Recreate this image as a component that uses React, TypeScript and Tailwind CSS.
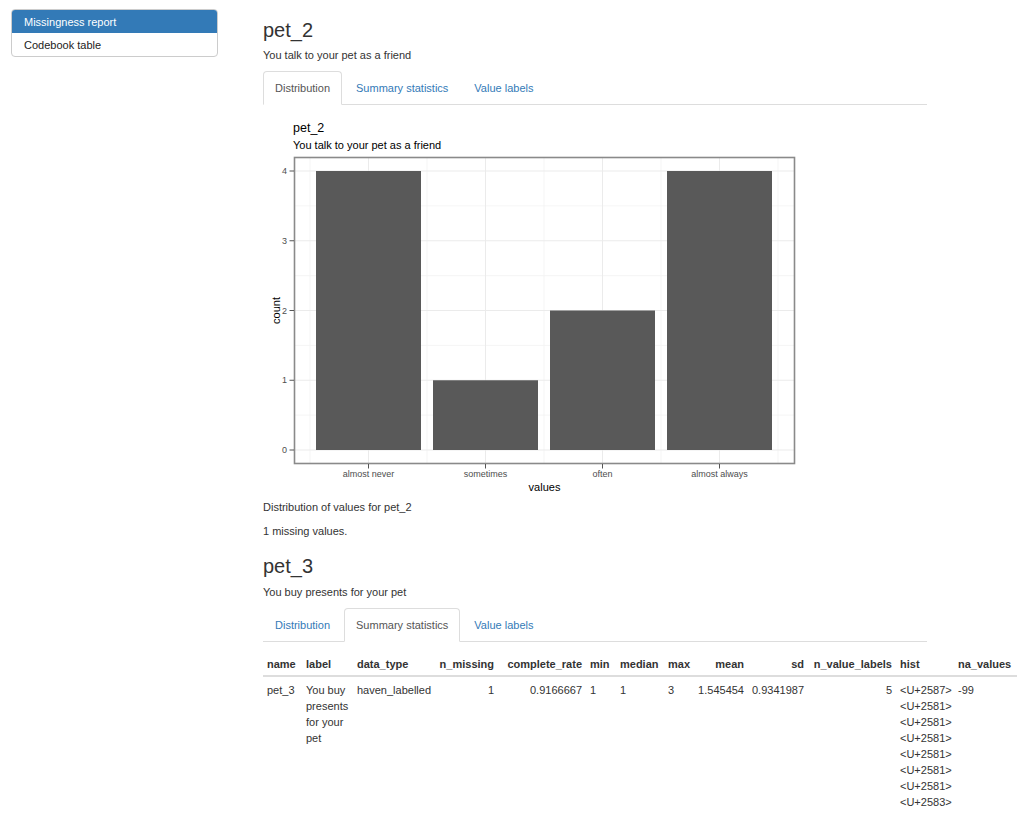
import React from "react";

const FONT = { fontFamily: '"Liberation Sans", Arial, Helvetica, sans-serif' };

function Tabs({ active }: { active: number }) {
  const labels = ["Distribution", "Summary statistics", "Value labels"];
  return (
    <ul className="flex border-b border-[#ddd] text-[11px] leading-[16px]">
      {labels.map((l, i) => (
        <li key={l} className="mr-[2px] -mb-px">
          {i === active ? (
            <span className="block px-[11px] py-[8px] border border-[#ddd] border-b-white bg-white rounded-t-[4px] text-[#555]">
              {l}
            </span>
          ) : (
            <span className="block px-[11px] py-[8px] border border-transparent rounded-t-[4px] text-[#337ab7]">
              {l}
            </span>
          )}
        </li>
      ))}
    </ul>
  );
}

function Plot() {
  const yOf = (v: number) => 450 - v * 69.75;
  const bars = [
    { l: "almost never", c: 368.5, v: 4 },
    { l: "sometimes", c: 485.5, v: 1 },
    { l: "often", c: 602.5, v: 2 },
    { l: "almost always", c: 719.5, v: 4 },
  ];
  const minorX = [310, 427, 544, 661, 778];
  const minorY = [0.5, 1.5, 2.5, 3.5];
  const majorY = [0, 1, 2, 3, 4];
  return (
    <svg
      width={545}
      height={390}
      viewBox="263 105 545 390"
      className="block"
      style={FONT}
    >
      <text x={293} y={132} fontSize={12.5} fill="#000">
        pet_2
      </text>
      <text x={293} y={148.5} fontSize={11} fill="#000">
        You talk to your pet as a friend
      </text>
      <rect x={294} y={157} width={501} height={307} fill="#fff" />
      {minorX.map((x) => (
        <line key={"mx" + x} x1={x} x2={x} y1={157} y2={464} stroke="#f2f2f2" strokeWidth={0.8} />
      ))}
      {minorY.map((v) => (
        <line key={"my" + v} x1={294} x2={795} y1={yOf(v)} y2={yOf(v)} stroke="#f2f2f2" strokeWidth={0.8} />
      ))}
      {bars.map((b) => (
        <line key={"gx" + b.c} x1={b.c} x2={b.c} y1={157} y2={464} stroke="#ebebeb" strokeWidth={1} />
      ))}
      {majorY.map((v) => (
        <line key={"gy" + v} x1={294} x2={795} y1={yOf(v)} y2={yOf(v)} stroke="#ebebeb" strokeWidth={1} />
      ))}
      {bars.map((b) => (
        <rect key={"b" + b.l} x={b.c - 52.5} y={yOf(b.v)} width={105} height={450 - yOf(b.v)} fill="#595959" />
      ))}
      <rect x={294.5} y={157.5} width={500} height={306} fill="none" stroke="#8a8a8a" strokeWidth={1.6} />
      {majorY.map((v) => (
        <g key={"t" + v}>
          <line x1={289.5} x2={294} y1={yOf(v)} y2={yOf(v)} stroke="#555" strokeWidth={1} />
          <text x={287} y={yOf(v) + 3.2} fontSize={9} fill="#4d4d4d" textAnchor="end">
            {v}
          </text>
        </g>
      ))}
      {bars.map((b) => (
        <g key={"xt" + b.l}>
          <line x1={b.c} x2={b.c} y1={464} y2={468.5} stroke="#555" strokeWidth={1} />
          <text x={b.c} y={477} fontSize={9} fill="#4d4d4d" textAnchor="middle">
            {b.l}
          </text>
        </g>
      ))}
      <text x={544.5} y={490.5} fontSize={11} fill="#000" textAnchor="middle">
        values
      </text>
      <text
        x={279.5}
        y={310.5}
        fontSize={11}
        fill="#000"
        textAnchor="middle"
        transform="rotate(-90 279.5 310.5)"
      >
        count
      </text>
    </svg>
  );
}

function StatsTable() {
  const widths = [39, 51, 81, 64, 88, 30, 48, 29, 55, 60, 88, 58, 63];
  const heads: { t: string; r?: boolean }[] = [
    { t: "name" },
    { t: "label" },
    { t: "data_type" },
    { t: "n_missing", r: true },
    { t: "complete_rate", r: true },
    { t: "min" },
    { t: "median" },
    { t: "max" },
    { t: "mean", r: true },
    { t: "sd", r: true },
    { t: "n_value_labels", r: true },
    { t: "hist" },
    { t: "na_values" },
  ];
  const hist = [
    "<U+2587>",
    "<U+2581>",
    "<U+2581>",
    "<U+2581>",
    "<U+2581>",
    "<U+2581>",
    "<U+2581>",
    "<U+2583>",
  ];
  const tdL = "px-[4px] pt-[5px] align-top text-left whitespace-nowrap";
  const tdR = "pl-[2px] pr-[4px] pt-[5px] align-top text-right whitespace-nowrap";
  return (
    <table className="table-fixed border-collapse w-[754px] mt-[10px] text-[11px] leading-[16px] text-[#333]">
      <colgroup>
        {widths.map((w, i) => (
          <col key={i} style={{ width: w }} />
        ))}
      </colgroup>
      <thead>
        <tr className="border-b-2 border-[#ddd]">
          {heads.map((h) => (
            <th
              key={h.t}
              className={
                (h.r ? "pl-[2px] pr-[4px] text-right" : "px-[4px] text-left") +
                " pt-[4px] pb-[3px] font-bold whitespace-nowrap align-bottom"
              }
            >
              {h.t}
            </th>
          ))}
        </tr>
      </thead>
      <tbody>
        <tr>
          <td className={tdL}>pet_3</td>
          <td className="px-[4px] pt-[5px] align-top text-left">You buy presents for your pet</td>
          <td className={tdL}>haven_labelled</td>
          <td className={tdR}>1</td>
          <td className={tdR}>0.9166667</td>
          <td className={tdL}>1</td>
          <td className={tdL}>1</td>
          <td className={tdL}>3</td>
          <td className={tdR}>1.545454</td>
          <td className={tdR}>0.9341987</td>
          <td className={tdR}>5</td>
          <td className={tdL}>
            {hist.map((h, i) => (
              <div key={i}>{h}</div>
            ))}
          </td>
          <td className={tdL}>-99</td>
        </tr>
      </tbody>
    </table>
  );
}

export default function App() {
  return (
    <div className="min-h-[815px] bg-white text-[#333]" style={FONT}>
      <div className="flex items-start pt-[9px] pl-[11px]">
        <div className="w-[207px] shrink-0 border border-[#ccc] rounded-[4px] overflow-hidden text-[11px] leading-[16px]">
          <div className="h-[23px] flex items-center px-[12px] bg-[#337ab7] text-white">Missingness report</div>
          <div className="h-[23px] flex items-center px-[12px] text-[#222]">Codebook table</div>
        </div>
        <div className="ml-[45px] w-[664px] shrink-0 mt-[10px]">
          <h2 className="text-[20px] leading-[22px] font-normal">pet_2</h2>
          <p className="mt-[6px] text-[11px] leading-[16px]">You talk to your pet as a friend</p>
          <div className="mt-[8px]">
            <Tabs active={0} />
          </div>
          <Plot />
          <p className="mt-[4px] text-[11px] leading-[16px]">Distribution of values for pet_2</p>
          <p className="mt-[8px] text-[11px] leading-[16px]">1 missing values.</p>

          <h2 className="mt-[16px] text-[20px] leading-[22px] font-normal">pet_3</h2>
          <p className="mt-[7px] text-[11px] leading-[16px]">You buy presents for your pet</p>
          <div className="mt-[8px]">
            <Tabs active={1} />
          </div>
          <StatsTable />
        </div>
      </div>
    </div>
  );
}
